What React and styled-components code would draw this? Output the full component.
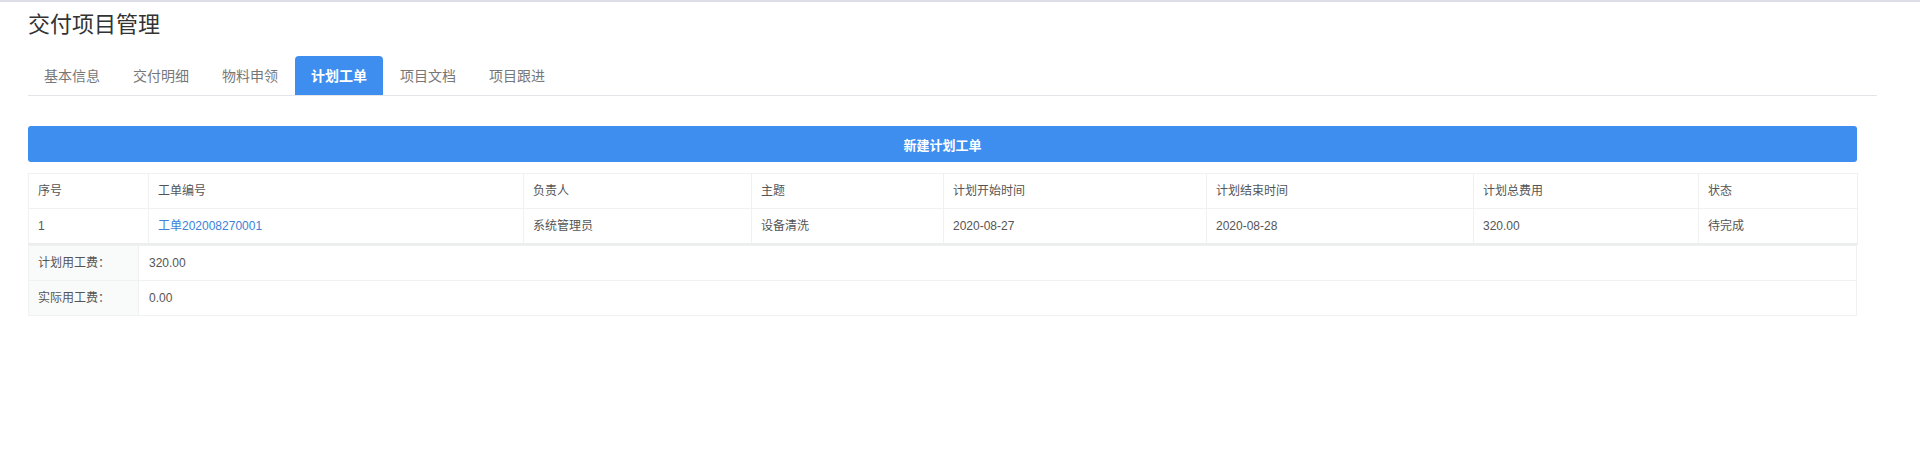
import styled, { createGlobalStyle } from 'styled-components'

const GlobalStyle = createGlobalStyle`
  body {
    margin: 0;
    background: #fff;
    font-family: "Liberation Sans", "Noto Sans CJK SC", sans-serif;
    color: #555;
  }
`

const Page = styled.div`
  border-top: 2px solid #dcdde7;
  padding: 0 43px 40px 28px;
`

const Title = styled.h2`
  margin: 0;
  padding-top: 8px;
  font-size: 22px;
  line-height: 30px;
  font-weight: normal;
  color: #333;
`

const TabBar = styled.ul`
  display: flex;
  gap: 1px;
  list-style: none;
  margin: 16px 0 0;
  padding: 0;
  border-bottom: 1px solid #e3e5e9;
`

const Tab = styled.li`
  padding: 10px 16px 9px;
  font-size: 14px;
  line-height: 20px;
  border-radius: 4px 4px 0 0;
  color: ${(p) => (p.active ? '#fff' : '#777')};
  background: ${(p) => (p.active ? '#3e8ef0' : 'transparent')};
  font-weight: ${(p) => (p.active ? 'bold' : 'normal')};
  cursor: pointer;
`

const Content = styled.div`
  padding: 30px 20px 0 0;
`

const NewButton = styled.button`
  display: block;
  width: 100%;
  height: 36px;
  border: none;
  border-radius: 3px;
  background: #3e8ef0;
  color: #fff;
  font-family: inherit;
  font-size: 13px;
  font-weight: bold;
  cursor: pointer;
`

const Table = styled.table`
  width: 100%;
  border-collapse: collapse;
  table-layout: fixed;
  margin-top: ${(p) => (p.first ? '11px' : '0')};
  border: 1px solid #eff1f1;
  border-bottom: ${(p) => (p.first ? '2px solid #eceeee' : '1px solid #eff1f1')};
  font-size: 12px;
`

const Cell = styled.td`
  padding: 8px ${(p) => (p.wide ? '10px' : '9px')};
  line-height: 18px;
  border: 1px solid #f0f2f2;
  color: ${(p) => (p.link ? '#3c82d8' : '#555')};
  background: ${(p) => (p.label ? '#f9fafa' : 'transparent')};
  text-align: left;
  font-weight: normal;
  white-space: nowrap;
`

const columns = [
  ['序号', 120],
  ['工单编号', 375],
  ['负责人', 228],
  ['主题', 192],
  ['计划开始时间', 263],
  ['计划结束时间', 267],
  ['计划总费用', 225],
  ['状态', 159],
]

const row = ['1', '工单202008270001', '系统管理员', '设备清洗', '2020-08-27', '2020-08-28', '320.00', '待完成']

const summary = [
  ['计划用工费：', '320.00'],
  ['实际用工费：', '0.00'],
]

const tabs = ['基本信息', '交付明细', '物料申领', '计划工单', '项目文档', '项目跟进']

const App = () => (
  <Page>
    <GlobalStyle />
    <Title>交付项目管理</Title>
    <TabBar>
      {tabs.map((t) => (
        <Tab key={t} active={t === '计划工单'}>{t}</Tab>
      ))}
    </TabBar>
    <Content>
      <NewButton>新建计划工单</NewButton>
      <Table first>
        <colgroup>
          {columns.map(([name, w]) => <col key={name} style={{ width: w }} />)}
        </colgroup>
        <thead>
          <tr>
            {columns.map(([name]) => <Cell as='th' key={name}>{name}</Cell>)}
          </tr>
        </thead>
        <tbody>
          <tr>
            {row.map((v, i) => <Cell key={i} link={i === 1}>{v}</Cell>)}
          </tr>
        </tbody>
      </Table>
      <Table>
        <colgroup>
          <col style={{ width: 110 }} />
          <col />
        </colgroup>
        <tbody>
          {summary.map(([label, value]) => (
            <tr key={label}>
              <Cell label>{label}</Cell>
              <Cell wide>{value}</Cell>
            </tr>
          ))}
        </tbody>
      </Table>
    </Content>
  </Page>
)

export default App
